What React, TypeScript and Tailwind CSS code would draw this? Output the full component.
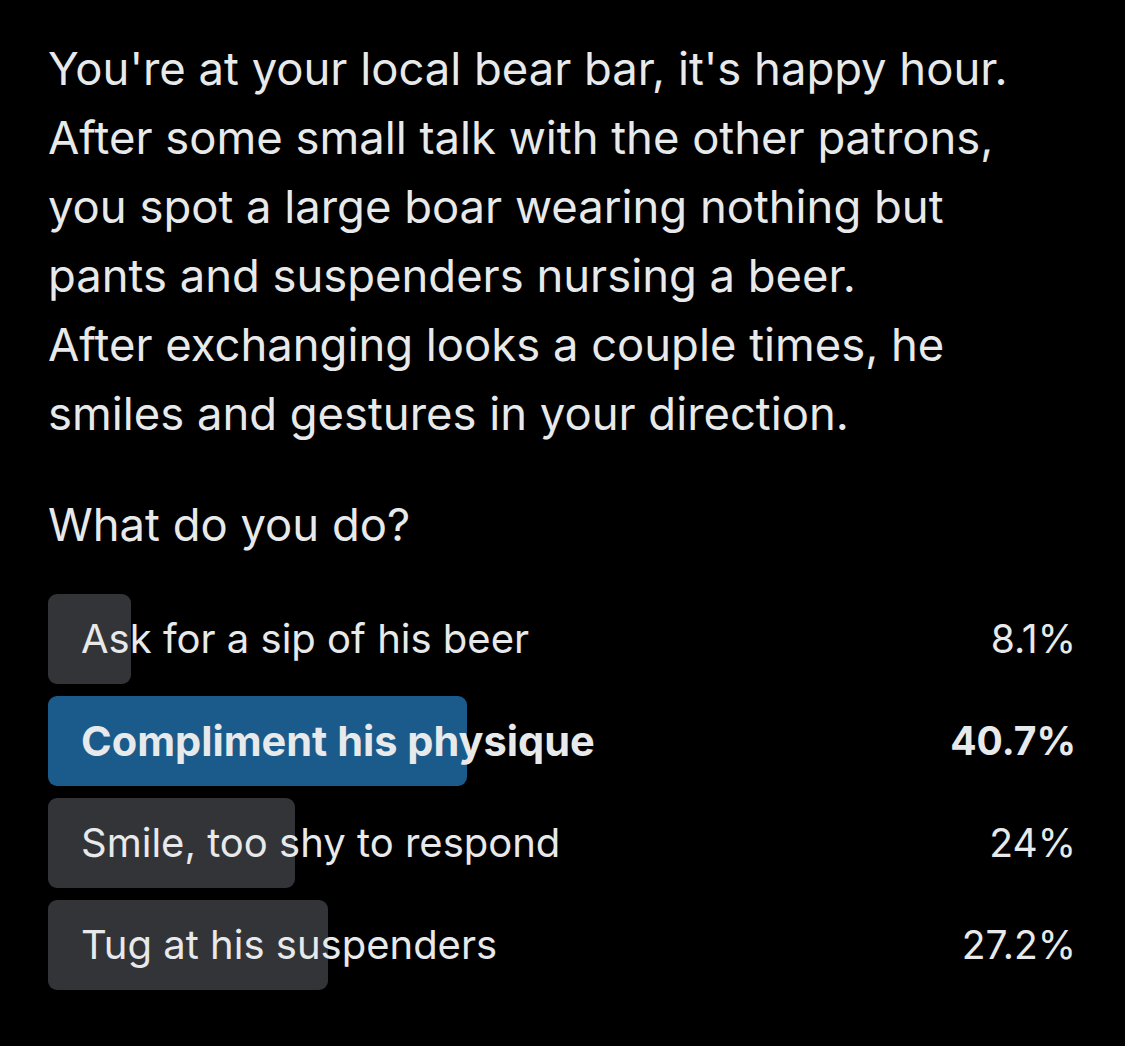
import React from "react";

const options = [
  { label: "Ask for a sip of his beer", pct: 8.1, text: "8.1%", win: false },
  { label: "Compliment his physique", pct: 40.7, text: "40.7%", win: true },
  { label: "Smile, too shy to respond", pct: 24, text: "24%", win: false },
  { label: "Tug at his suspenders", pct: 27.2, text: "27.2%", win: false },
];

export default function App() {
  return (
    <div
      className="w-[1125px] h-[1046px] bg-black text-[#e7e9ea] overflow-hidden"
      style={{ fontFamily: "Inter, 'Noto Sans', sans-serif" }}
    >
      <div className="pl-[48px] pr-[48px] pt-[34px]">
        <div className="text-[45.4px] leading-[69px]">
          <div>You're at your local bear bar, it's happy hour.</div>
          <div>After some small talk with the other patrons,</div>
          <div>you spot a large boar wearing nothing but</div>
          <div>pants and suspenders nursing a beer.</div>
          <div>After exchanging looks a couple times, he</div>
          <div>smiles and gestures in your direction.</div>
          <div className="mt-[42px]">What do you do?</div>
        </div>
        <div className="mt-[35px] flex flex-col gap-[12px] w-[1029px]">
          {options.map((o) => (
            <div key={o.label} className="relative h-[90px] flex items-center">
              <div
                className={`absolute left-0 top-0 h-full rounded-[9px] ${o.win ? "bg-[#1a5b8b]" : "bg-[#333438]"}`}
                style={{ width: `${o.pct}%` }}
              />
              <div
                className={`relative flex-1 pl-[33px] ${o.win ? "font-bold text-[41.5px]" : "text-[40px]"}`}
              >
                {o.label}
              </div>
              <div className={`relative pr-[1px] ${o.win ? "font-bold text-[39px]" : "text-[39px]"}`}>
                {o.text}
              </div>
            </div>
          ))}
        </div>
      </div>
    </div>
  );
}
